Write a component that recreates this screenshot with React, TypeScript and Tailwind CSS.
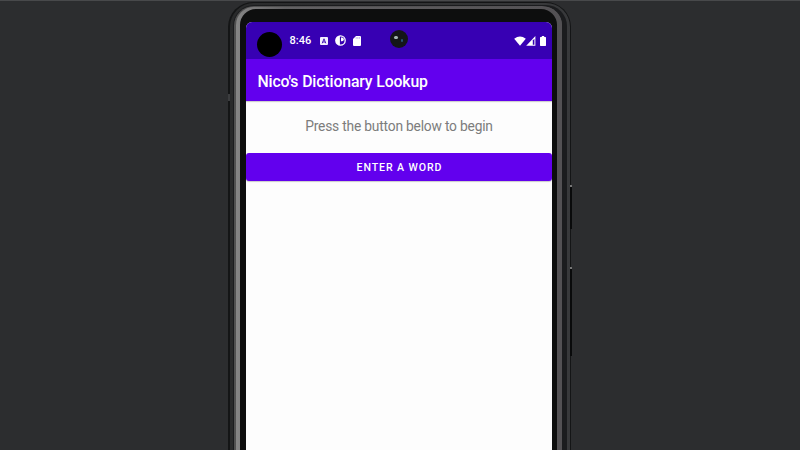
import type { ReactNode } from "react";

function NotificationIcons() {
  return (
    <div className="flex items-center gap-[7px]">
      <svg className="h-[8px] w-[8px]" viewBox="0 0 8 8">
        <rect width="8" height="8" rx="1" fill="#f4f0ff" />
        <path d="M2.2 6.3 L4 1.8 L5.8 6.3 M2.8 5 H5.2" stroke="#3700b3" strokeWidth=".9" fill="none" />
      </svg>
      <svg className="h-[11px] w-[11px]" viewBox="0 0 11 11">
        <circle cx="5.5" cy="5.5" r="4.7" fill="none" stroke="#fff" strokeWidth="1.3" />
        <path d="M4.9 .8 A4.8 4.8 0 0 0 3 9.6 L4.9 10.2 Z" fill="#fff" />
        <path d="M6 2.6 H7 A1.8 1.8 0 0 1 7 6.2 H6 Z" fill="#fff" />
      </svg>
      <svg className="h-[10px] w-[8px]" viewBox="0 0 8 10">
        <path d="M3 0 H7 Q8 0 8 1 V9 Q8 10 7 10 H1 Q0 10 0 9 V3 Z" fill="#fff" />
        <path d="M3.2 1.2 V2.7 M4.8 1.2 V2.7 M6.4 1.2 V2.7" stroke="#8f6fd8" strokeWidth=".6" />
      </svg>
    </div>
  );
}

function SignalIcons() {
  return (
    <div className="flex items-center">
      <svg className="h-[10px] w-[12px]" viewBox="0 0 12 10">
        <path d="M.2 2.7 Q6 -1.9 11.8 2.7 L6 9.8 Z" fill="#fff" />
      </svg>
      <svg className="h-[10px] w-[10px]" viewBox="0 0 10 10">
        <path d="M.2 9.7 L9.4 0 V9.7 Z" fill="#fff" />
        <path d="M6.8 4.4 L8.4 2.7 V8.7 H6.8 Z" fill="#3700b3" />
      </svg>
      <svg className="ml-[4px] h-[10px] w-[6px]" viewBox="0 0 6 10">
        <path d="M1.8 0 H4.2 V1 H5.5 L6 1.5 V9.5 L5.5 10 H.5 L0 9.5 V1.5 L.5 1 H1.8 Z" fill="#fff" />
      </svg>
    </div>
  );
}

function Bezel({ children }: { children: ReactNode }) {
  return (
    <div className="h-[480px] w-[343px] shrink-0 rounded-[25px] bg-[#141516] pt-[1px] pr-[1px] pl-[2px]">
      <div className="h-full rounded-[24px] bg-gradient-to-r from-[#292a2b] to-[#38393b] pt-[2px] pr-[3px] pl-[3px]">
        <div className="h-full rounded-[21px] bg-[#1b1c1e] pt-[1px] pr-[5px] pl-[1px]">
          <div className="h-full rounded-[20px] bg-gradient-to-r from-[#505050] to-[#555356] pt-[1px] pl-[2px]">
            <div className="h-full rounded-[18px] bg-gradient-to-r from-[#858585] via-[#626163] via-15% to-[#535154] pt-[2px] pr-[5px] pl-[4px]">
              <div className="h-full rounded-[16px] bg-[#0d0e0e] pt-[13px] pr-[5px] pl-[6px]">
                {children}
              </div>
            </div>
          </div>
        </div>
      </div>
    </div>
  );
}

function CameraLens() {
  return (
    <div className="absolute top-[8px] left-1/2 flex h-[18px] w-[18px] -translate-x-1/2 items-center justify-center gap-[3px] rounded-full bg-[#141619]">
      <span className="mb-[3px] h-[3px] w-[4px] rounded-full bg-[#a5b5b5]" />
      <span className="mt-[3px] h-[3px] w-[2px] rounded-full bg-[#285377]" />
    </div>
  );
}

export default function App() {
  return (
    <div className="flex h-[450px] w-[800px] justify-center overflow-hidden border-t border-[#48494b] bg-[#2c2d2f] pt-px pr-[2px] font-[Roboto,sans-serif]">
      <div className="-mr-[2px] ml-[1px] flex w-[2px] shrink-0 flex-col pt-[92px]">
        <div className="z-10 h-[7px] bg-[#3c3d3f]" />
      </div>
      <Bezel>
        <div className="relative h-full overflow-hidden rounded-t-[6px] bg-[#fdfdfd]">
          <div className="flex h-[37px] items-center justify-between bg-[#3700b3] pr-[6px] pl-[11px]">
            <div className="flex items-center gap-[8px]">
              <div className="mt-[8px] h-[25px] w-[25px] shrink-0 rounded-full bg-black" />
              <span className="w-[22px] text-[11px] leading-none font-medium whitespace-nowrap text-white">8:46</span>
              <NotificationIcons />
            </div>
            <SignalIcons />
          </div>
          <CameraLens />
          <header className="flex h-[42px] items-center bg-[#6200ee] pt-[3px] pl-[12px] text-[15.8px] font-medium tracking-[-0.13px] whitespace-nowrap text-white shadow-[0_1px_1px_rgba(0,0,0,0.18)]">
            Nico's Dictionary Lookup
          </header>
          <p className="pt-[15px] pl-[1px] text-center text-[13.8px] leading-[20px] tracking-[-0.2px] whitespace-nowrap text-[#7c7c7c]">
            Press the button below to begin
          </p>
          <button className="mt-[17px] flex h-[28px] w-full items-center justify-center rounded-[3px] bg-[#6200ee] pt-[2px] pl-[2px] text-[10.6px] font-medium tracking-[0.9px] text-white shadow-[0_1px_1px_rgba(0,0,0,0.2)]">
            ENTER A WORD
          </button>
        </div>
      </Bezel>
      <div className="z-10 -ml-[1px] flex w-[2px] shrink-0 flex-col gap-[38px] pt-[183px]">
        <div className="h-[44px] border-t-2 border-[#777] bg-[#090a0b]" />
        <div className="h-[89px] border-t-2 border-[#777] bg-[#090a0b]" />
      </div>
    </div>
  );
}
